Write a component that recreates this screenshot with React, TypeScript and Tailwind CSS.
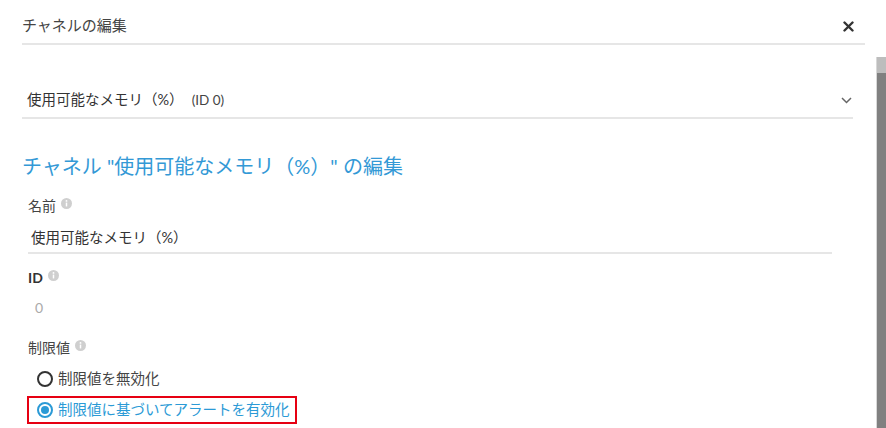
import React from 'react';

const font = { fontFamily: '"Lato", "Noto Sans CJK JP", sans-serif' };

function InfoIcon() {
  return (
    <svg width="11" height="11" viewBox="0 0 12 12" className="ml-[5px] -mt-[3px] shrink-0">
      <circle cx="6" cy="6" r="6" fill="#cfcfcf" />
      <rect x="5.2" y="5" width="1.6" height="4.2" fill="#fff" />
      <circle cx="6" cy="3.2" r="1" fill="#fff" />
    </svg>
  );
}

function Radio({ checked }: { checked?: boolean }) {
  return (
    <span
      className={
        'w-[16px] h-[16px] rounded-full border-2 flex items-center justify-center shrink-0 ' +
        (checked ? 'border-[#2b9ad6]' : 'border-[#333]')
      }
    >
      {checked && <span className="w-[8px] h-[8px] rounded-full bg-[#2b9ad6]" />}
    </span>
  );
}

export default function App() {
  return (
    <div className="w-[886px] h-[428px] overflow-hidden bg-white flex flex-col" style={font}>
      {/* Header */}
      <div className="ml-[22px] w-[843px] h-[45px] pt-[8px] flex items-center justify-between border-b-2 border-[#e6e6e6] shrink-0">
        <span className="text-[15px] text-[#444]">チャネルの編集</span>
        <svg width="11" height="11" viewBox="0 0 11 11" className="mr-[11px] mt-[2px]">
          <path d="M1.5 1.5 L9.5 9.5 M9.5 1.5 L1.5 9.5" stroke="#333" strokeWidth="2.4" strokeLinecap="round" />
        </svg>
      </div>

      {/* Body */}
      <div className="flex flex-1 mt-[12px] min-h-0">
        <div className="flex-1 pl-[22px] pr-[23px]">
          {/* Channel dropdown */}
          <div className="mt-[26px] h-[36px] flex items-center justify-between border-b-2 border-[#e6e6e6]">
            <span className="pl-[5px] text-[14.5px] text-[#333]">
              使用可能なメモリ（%）<span className="ml-[8px] text-[13.5px] text-[#444]">(ID 0)</span>
            </span>
            <svg width="11" height="7" viewBox="0 0 11 7" className="mr-[1px]">
              <path d="M1 1 L5.5 5.5 L10 1" stroke="#666" strokeWidth="1.5" fill="none" />
            </svg>
          </div>

          {/* Heading */}
          <h2 className="mt-[33px] h-[28px] leading-[28px] text-[20px] text-[#3399d6]">
            チャネル "使用可能なメモリ（%）" の編集
          </h2>

          <div className="ml-[6px] mr-[21px]">
            {/* Name */}
            <div className="mt-[15px] h-[20px] flex items-center text-[14px] text-[#444]">
              名前
              <InfoIcon />
            </div>
            <div className="mt-[8px] h-[31px] pl-[3px] flex items-center border-b-2 border-[#e6e6e6] text-[14.5px] text-[#333]">
              使用可能なメモリ（%）
            </div>

            {/* ID */}
            <div className="mt-[13px] h-[20px] flex items-center text-[14px] font-bold text-[#333]">
              ID
              <InfoIcon />
            </div>
            <div className="mt-[10px] h-[20px] pl-[7px] flex items-center text-[14px] text-[#aaa]">0</div>

            {/* Limits */}
            <div className="mt-[20px] h-[20px] flex items-center text-[14px] text-[#444]">
              制限値
              <InfoIcon />
            </div>
            <div className="mt-[12px] h-[20px] pl-[9px] flex items-center gap-[5px] text-[14.5px] text-[#444]">
              <Radio />
              制限値を無効化
            </div>
            <div className="mt-[7px] -ml-[1px] w-[270px] h-[28px] pl-[8px] flex items-center gap-[5px] border-2 border-[#e60012] text-[14.5px] text-[#2b9ad6]">
              <Radio checked />
              制限値に基づいてアラートを有効化
            </div>
          </div>
        </div>

        {/* Scrollbar */}
        <div className="w-[10px] flex flex-col border-l border-[#d8d8d8]">
          <div className="h-[16px] bg-[#bdbdbd]" />
          <div className="flex-1 bg-[#808080]" />
        </div>
      </div>
    </div>
  );
}
